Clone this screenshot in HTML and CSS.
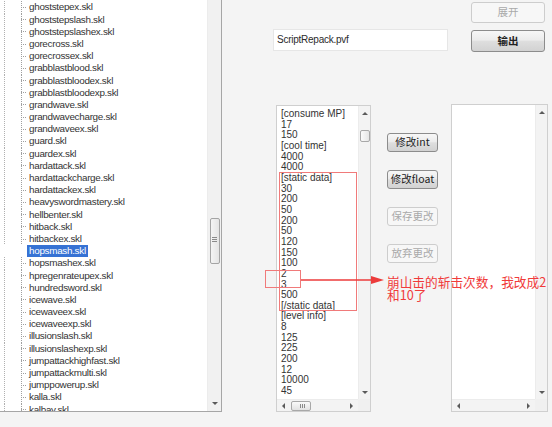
FILE: index.html
```html
<!DOCTYPE html>
<html>
<head>
<meta charset="utf-8">
<link rel="stylesheet" href="styles.css">
</head>
<body>
<div class="window">
  <div class="tree">
    <ul class="tree-list">
      <li><span>ghoststep.skl</span></li>
      <li><span>ghoststepex.skl</span></li>
      <li><span>ghoststepslash.skl</span></li>
      <li><span>ghoststepslashex.skl</span></li>
      <li><span>gorecross.skl</span></li>
      <li><span>gorecrossex.skl</span></li>
      <li><span>grabblastblood.skl</span></li>
      <li><span>grabblastbloodex.skl</span></li>
      <li><span>grabblastbloodexp.skl</span></li>
      <li><span>grandwave.skl</span></li>
      <li><span>grandwavecharge.skl</span></li>
      <li><span>grandwaveex.skl</span></li>
      <li><span>guard.skl</span></li>
      <li><span>guardex.skl</span></li>
      <li><span>hardattack.skl</span></li>
      <li><span>hardattackcharge.skl</span></li>
      <li><span>hardattackex.skl</span></li>
      <li><span>heavyswordmastery.skl</span></li>
      <li><span>hellbenter.skl</span></li>
      <li><span>hitback.skl</span></li>
      <li><span>hitbackex.skl</span></li>
      <li class="sel"><span>hopsmash.skl</span></li>
      <li><span>hopsmashex.skl</span></li>
      <li><span>hpregenrateupex.skl</span></li>
      <li><span>hundredsword.skl</span></li>
      <li><span>icewave.skl</span></li>
      <li><span>icewaveex.skl</span></li>
      <li><span>icewaveexp.skl</span></li>
      <li><span>illusionslash.skl</span></li>
      <li><span>illusionslashexp.skl</span></li>
      <li><span>jumpattackhighfast.skl</span></li>
      <li><span>jumpattackmulti.skl</span></li>
      <li><span>jumppowerup.skl</span></li>
      <li><span>kalla.skl</span></li>
      <li><span>kalbay.skl</span></li>
    </ul>
    <div class="tree-vbar">
      <div class="tree-thumb"></div>
      <div class="arr arr-down tree-down"></div>
    </div>
  </div>

  <div class="main">
    <div class="top">
      <div class="path">ScriptRepack.pvf</div>
      <div class="top-btns">
        <div class="btn dis wide">展开</div>
        <div class="btn wide bold">输出</div>
      </div>
    </div>

    <div class="bottom">
      <div class="listbox mid">
        <div class="lb-body">
          <ul class="values">
            <li>[consume MP]</li>
            <li>17</li>
            <li>150</li>
            <li>[cool time]</li>
            <li>4000</li>
            <li>4000</li>
            <li>[static data]</li>
            <li>30</li>
            <li>200</li>
            <li>50</li>
            <li>200</li>
            <li>50</li>
            <li>120</li>
            <li>150</li>
            <li>100</li>
            <li>2</li>
            <li>3</li>
            <li>500</li>
            <li>[/static data]</li>
            <li>[level info]</li>
            <li>8</li>
            <li>125</li>
            <li>225</li>
            <li>200</li>
            <li>12</li>
            <li>10000</li>
            <li>45</li>
          </ul>
          <div class="vbar">
            <div class="arr arr-up"></div>
            <div class="vthumb"></div>
            <div class="arr arr-down push-end"></div>
          </div>
        </div>
        <div class="hrow">
          <div class="hbar">
            <div class="arr arr-left"></div>
            <div class="hthumb"></div>
            <div class="arr arr-right push-end"></div>
          </div>
          <div class="corner"></div>
        </div>
      </div>

      <div class="edit-btns">
        <div class="btn small">修改int</div>
        <div class="btn small">修改float</div>
        <div class="btn small dis">保存更改</div>
        <div class="btn small dis">放弃更改</div>
      </div>

      <div class="listbox right">
        <div class="lb-body">
          <div class="empty"></div>
          <div class="vbar">
            <div class="arr arr-up"></div>
            <div class="arr arr-down push-end"></div>
          </div>
        </div>
        <div class="hrow">
          <div class="hbar">
            <div class="arr arr-left"></div>
            <div class="arr arr-right push-end"></div>
          </div>
          <div class="corner"></div>
        </div>
      </div>
    </div>
  </div>

  <svg class="annot-svg" width="552" height="427" viewBox="0 0 552 427">
    <rect x="279.5" y="172.5" width="77" height="138" fill="none" stroke="#f07a7a" stroke-width="1"/>
    <rect x="265.5" y="270.5" width="35" height="17" fill="none" stroke="#f07a7a" stroke-width="1"/>
    <line x1="301" y1="280" x2="373" y2="280" stroke="#ec3b3b" stroke-width="1.6"/>
    <polygon points="371,276 384,280 371,284" fill="#ec3b3b"/>
  </svg>
  <div class="annot-text">崩山击的斩击次数，我改成2<br>和10了</div>
</div>
</body>
</html>
```

FILE: styles.css
```css
html, body {
  margin: 0;
  padding: 0;
}
body {
  background: #f4f4f4;
  width: 552px;
  height: 427px;
  overflow: hidden;
}
.window {
  position: relative;
  display: flex;
  width: 552px;
  height: 427px;
  background: #f4f4f4;
}

/* ---------- left tree ---------- */
.tree {
  display: flex;
  width: 221px;
  height: 411px;
  background: #fff;
  border-right: 1px solid #a6a6a6;
  border-bottom: 1px solid #a6a6a6;
  overflow: hidden;
  flex: none;
}
.tree-list {
  list-style: none;
  margin: -10.8px 0 0 0;
  padding: 0;
  width: 207px;
  font-family: "Liberation Sans", sans-serif;
  font-size: 9.9px;
  letter-spacing: -0.3px;
  color: #333;
}
.tree-list li {
  height: 12.2px;
  line-height: 12.2px;
  padding-left: 27px;
  white-space: nowrap;
  background:
    repeating-linear-gradient(to right, #a0a0a0 0 1px, transparent 1px 2px) no-repeat 21px 50% / 6px 1px,
    repeating-linear-gradient(to bottom, #b0b0b0 0 1px, transparent 1px 2px) no-repeat 4px 0 / 1px 100%,
    repeating-linear-gradient(to bottom, #a0a0a0 0 1px, transparent 1px 2px) no-repeat 21px 0 / 1px 100%;
}
.tree-list li span {
  display: inline-block;
  padding: 0 2px;
  height: 12px;
  line-height: 12px;
}
.tree-list li.sel {
  background: none;
}
.tree-list li.sel span {
  background: #3672d4;
  color: #fff;
}
.tree-vbar {
  width: 13px;
  margin-left: 1px;
  display: flex;
  flex-direction: column;
  align-items: center;
  background: #f1f1f1;
  border-left: 1px solid #ececec;
}
.tree-thumb {
  margin-top: 218px;
  width: 10px;
  height: 46px;
  box-sizing: border-box;
  border: 1px solid #a4a4a4;
  border-radius: 2px;
  background:
    linear-gradient(#8a8a8a, #8a8a8a) no-repeat 50% 18px / 5px 1px,
    linear-gradient(#8a8a8a, #8a8a8a) no-repeat 50% 20px / 5px 1px,
    linear-gradient(#8a8a8a, #8a8a8a) no-repeat 50% 22px / 5px 1px,
    linear-gradient(to right, #f4f4f4, #e4e4e4);
}
.tree-down {
  margin-top: auto;
  margin-bottom: 6px;
}

/* ---------- arrows ---------- */
.arr {
  width: 0;
  height: 0;
  flex: none;
}
.arr-up {
  border-left: 3px solid transparent;
  border-right: 3px solid transparent;
  border-bottom: 3px solid #5a5a5a;
}
.arr-down {
  border-left: 3px solid transparent;
  border-right: 3px solid transparent;
  border-top: 3px solid #5a5a5a;
}
.arr-left {
  border-top: 3px solid transparent;
  border-bottom: 3px solid transparent;
  border-right: 3px solid #5a5a5a;
}
.arr-right {
  border-top: 3px solid transparent;
  border-bottom: 3px solid transparent;
  border-left: 3px solid #5a5a5a;
}
.push-end {
  margin-top: auto;
}

/* ---------- right side ---------- */
.main {
  display: flex;
  flex-direction: column;
  flex: 1;
}
.top {
  display: flex;
  align-items: flex-start;
  height: 51px;
}
.path {
  margin: 29px 0 0 51px;
  width: 175px;
  height: 22px;
  box-sizing: border-box;
  background: #fff;
  border: 1px solid #e6e6e6;
  padding: 4px 0 0 3px;
  font-family: "Liberation Sans", sans-serif;
  font-size: 10px;
  letter-spacing: -0.25px;
  color: #2b2b2b;
}
.top-btns {
  margin-left: 23px;
  display: flex;
  flex-direction: column;
}
.btn {
  box-sizing: border-box;
  display: flex;
  align-items: center;
  justify-content: center;
  border: 1px solid #8c8c8c;
  border-radius: 3px;
  background: linear-gradient(#f7f7f7, #ececec 45%, #dedede 52%, #d2d2d2);
  color: #222;
  font-family: "Noto Sans CJK SC", "Liberation Sans", sans-serif;
  font-size: 10.5px;
  line-height: 1;
}
.btn.dis {
  border-color: #cdcdcd;
  background: #f7f7f7;
  color: #a9a9a9;
}
.btn.wide {
  width: 74px;
}
.top-btns .btn:first-child {
  margin-top: 2px;
  height: 21px;
}
.top-btns .btn:last-child {
  margin-top: 7px;
  height: 22px;
}
.btn.bold {
  font-weight: bold;
}

.bottom {
  display: flex;
  align-items: flex-start;
}
.listbox {
  box-sizing: border-box;
  border: 1px solid #cfcfcf;
  background: #fff;
  display: flex;
  flex-direction: column;
}
.listbox.mid {
  margin: 54px 0 0 54px;
  width: 95px;
  height: 307px;
}
.listbox.right {
  margin: 53px 0 0 13px;
  width: 97px;
  height: 308px;
}
.lb-body {
  flex: 1;
  display: flex;
  min-height: 0;
}
.values {
  list-style: none;
  margin: 0;
  padding: 3px 0 0 4px;
  flex: 1;
  font-family: "Liberation Sans", sans-serif;
  font-size: 10px;
  color: #333;
  overflow: hidden;
}
.values li {
  height: 10.67px;
  line-height: 10.67px;
  white-space: nowrap;
}
.empty {
  flex: 1;
}
.vbar {
  width: 12px;
  display: flex;
  flex-direction: column;
  align-items: center;
  background: #f3f3f3;
  border-left: 1px solid #ececec;
  padding: 6px 0 5px;
  box-sizing: border-box;
}
.vthumb {
  margin-top: 15px;
  width: 10px;
  height: 12px;
  box-sizing: border-box;
  border: 1px solid #a8a8a8;
  border-radius: 2px;
  background: linear-gradient(to right, #fbfbfb, #e6e6e6);
}
.hrow {
  display: flex;
  height: 12px;
  flex: none;
}
.hbar {
  flex: 1;
  display: flex;
  align-items: center;
  background: #f3f3f3;
  border-top: 1px solid #ececec;
  padding: 0 5px 0 5px;
}
.hbar .push-end {
  margin-top: 0;
  margin-left: auto;
}
.hthumb {
  margin-left: 6px;
  width: 20px;
  height: 10px;
  box-sizing: border-box;
  border: 1px solid #a8a8a8;
  border-radius: 2px;
  background:
    linear-gradient(#8a8a8a, #8a8a8a) no-repeat 8px 50% / 1px 4px,
    linear-gradient(#8a8a8a, #8a8a8a) no-repeat 10px 50% / 1px 4px,
    linear-gradient(#8a8a8a, #8a8a8a) no-repeat 12px 50% / 1px 4px,
    linear-gradient(#fafafa, #e2e2e2);
}
.corner {
  width: 12px;
  background: #f0f0f0;
}

.edit-btns {
  margin: 82px 0 0 16px;
  display: flex;
  flex-direction: column;
}
.btn.small {
  width: 51px;
  height: 19px;
}
.edit-btns .btn + .btn {
  margin-top: 18px;
}

/* ---------- annotation overlay ---------- */
.annot-svg {
  position: absolute;
  left: 0;
  top: 0;
  pointer-events: none;
}
.annot-text {
  position: absolute;
  left: 387px;
  top: 275px;
  font-family: "Noto Sans CJK SC", sans-serif;
  font-size: 12.7px;
  line-height: 13px;
  color: #f03a3a;
  white-space: nowrap;
}
```
